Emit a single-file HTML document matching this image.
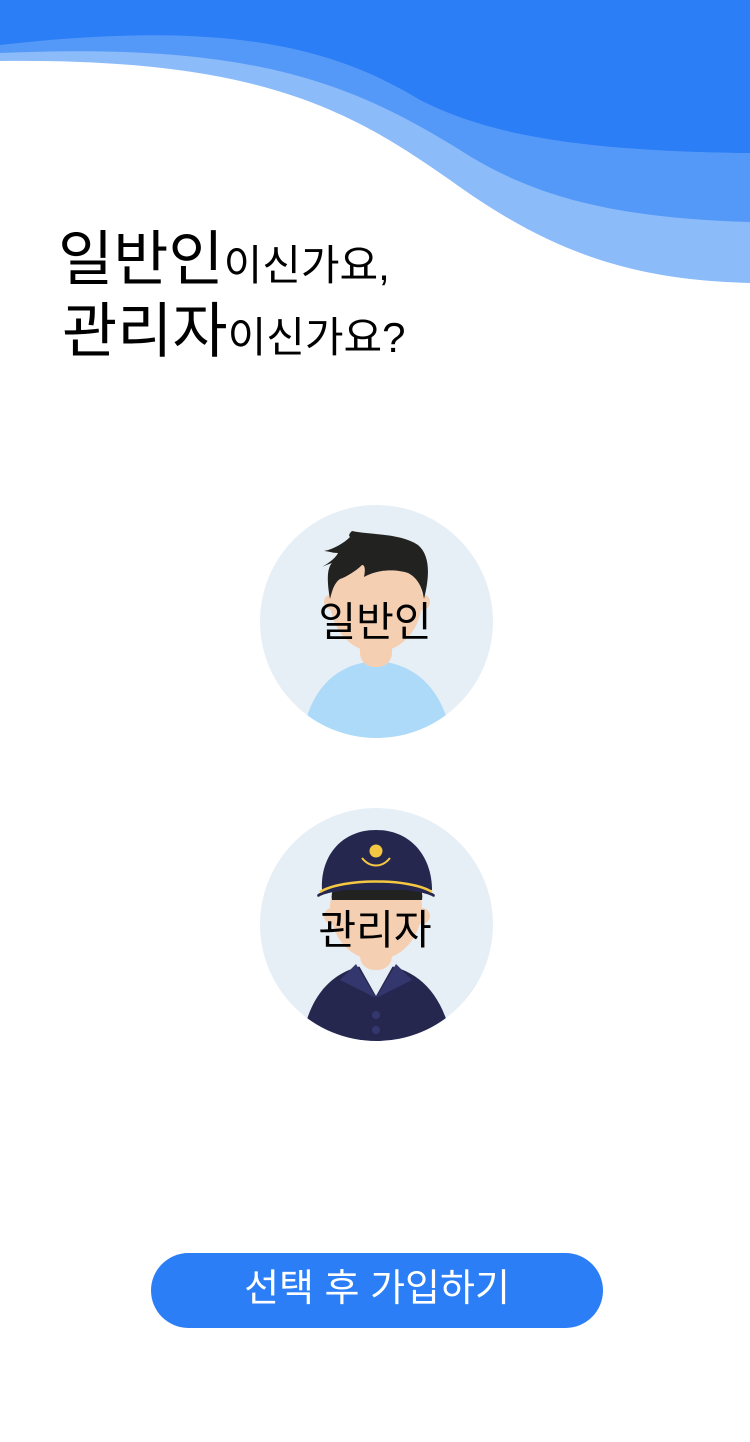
<!DOCTYPE html>
<html><head><meta charset="utf-8"><style>
body{margin:0;width:750px;height:1442px;background:#fff;position:relative;overflow:hidden;font-family:"Liberation Sans","Noto Sans CJK KR",sans-serif;}
.t{position:absolute;left:58px;color:#000;white-space:nowrap;line-height:1;}
.big{font-size:60px;}
.sm{font-size:42px;}
.av{position:absolute;left:260px;width:233px;height:233px;}
.lbl{position:absolute;left:0;width:750px;text-align:center;font-size:41px;color:#000;line-height:1;}
.btn{position:absolute;left:151px;top:1253px;width:452px;height:75px;border-radius:38px;background:#2B7EF6;color:#fff;font-size:38px;text-align:center;line-height:73px;}
</style></head><body>
<svg width="750" height="300" style="position:absolute;left:0;top:0">
<path d="M0,0H750V283C620,280 540,245 450,180C350,110 260,58 0,61Z" fill="#8BBBF9"/>
<path d="M0,0H750V222C610,218 530,195 460,150C350,82 250,42 0,53Z" fill="#5599F8"/>
<path d="M0,0H750V153C560,151 480,130 420,100C330,45 220,20 0,45Z" fill="#2B7EF6"/>
</svg>
<div class="t" style="top:230px"><span class="big">일반인</span><span class="sm">이신가요,</span></div>
<div class="t" style="top:302px;left:62px"><span class="big">관리자</span><span class="sm">이신가요?</span></div>

<svg class="av" style="top:505px" viewBox="0 0 233 233">
<defs><clipPath id="c1"><circle cx="116.5" cy="116.5" r="116.5"/></clipPath></defs>
<circle cx="116.5" cy="116.5" r="116.5" fill="#E7EFF6"/>
<g clip-path="url(#c1)">
<path d="M42,233C50,180 80,158 116,156C152,158 182,180 192,233Z" fill="#ADDAF8"/>
<rect x="100" y="120" width="32" height="42" rx="14" fill="#F4CFB2"/>
<ellipse cx="116" cy="95" rx="46" ry="52" fill="#F4CFB2"/>
<circle cx="72" cy="97" r="8" fill="#F4CFB2"/><circle cx="162" cy="97" r="8" fill="#F4CFB2"/>
<path d="M70,94C66,72 68,62 72,58C66,60 62,62 62,62C72,56 76,52 78,48C72,48 68,46 64,46C74,44 84,38 90,32C88,30 90,28 92,26C110,30 140,28 158,40C170,50 170,70 164,94C162,80 156,72 148,68C136,64 118,64 104,72C106,62 104,60 102,60C96,66 86,72 80,74C74,78 72,86 70,94Z" fill="#222220"/>
</g></svg>
<div class="lbl" style="top:602px">일반인</div>

<svg class="av" style="top:808px" viewBox="0 0 233 233">
<defs><clipPath id="c2"><circle cx="116.5" cy="116.5" r="116.5"/></clipPath></defs>
<circle cx="116.5" cy="116.5" r="116.5" fill="#E7EFF6"/>
<g clip-path="url(#c2)">
<path d="M42,233C50,180 80,158 116,156C152,158 182,180 192,233Z" fill="#25274F"/>
<path d="M98,156L116,188L134,156Z" fill="#E7EFF6"/>
<path d="M96,156L80,172L116,190Z M136,156L152,172L116,190Z" fill="#34376E"/>
<circle cx="116" cy="207" r="4" fill="#34376E"/><circle cx="116" cy="222" r="4" fill="#34376E"/>
<rect x="100" y="120" width="32" height="42" rx="14" fill="#F4CFB2"/>
<ellipse cx="116" cy="100" rx="46" ry="52" fill="#F4CFB2"/>
<circle cx="72" cy="108" r="8" fill="#F4CFB2"/><circle cx="162" cy="108" r="8" fill="#F4CFB2"/>
<path d="M72,92C70,80 78,74 90,70L142,70C156,74 164,80 162,92Z" fill="#222220"/>
<path d="M62,82C60,50 80,22 116,22C152,22 172,50 172,82Z" fill="#25274F"/>
<path d="M58,86C80,72 152,72 174,86C176,88 174,90 172,88C150,78 82,78 60,88C58,90 56,88 58,86Z" fill="#25274F"/>
<path d="M60,84C82,70 150,70 172,84" stroke="#F4C842" stroke-width="2.5" fill="none"/>
<circle cx="116" cy="43" r="6.5" fill="#F4C842"/>
<path d="M102,50C110,60 122,60 130,50" stroke="#F4C842" stroke-width="2" fill="none"/>
</g></svg>
<div class="lbl" style="top:910px">관리자</div>

<div class="btn">선택 후 가입하기</div>
</body></html>
